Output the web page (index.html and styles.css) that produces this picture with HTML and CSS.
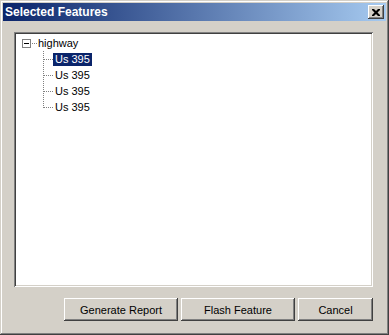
FILE: index.html
```html
<!DOCTYPE html>
<html lang="en">
<head>
    <meta charset="UTF-8">
    <title>Selected Features</title>
    <link rel="stylesheet" href="styles.css">
</head>
<body>

<div class="window">
    <div class="titlebar">
        <span class="title">Selected Features</span>
        <button class="close" aria-label="Close">
            <svg width="8" height="7" viewBox="0 0 8 7">
                <path d="M0 0h2l2 2 2-2h2v1l-2.5 2.5L8 6v1H6L4 5 2 7H0V6l2.5-2.5L0 1z" fill="#000"/>
            </svg>
        </button>
    </div>

    <div class="content">
        <div class="tree">
            <div class="row root">
                <span class="expander"><span class="minus"></span></span>
                <span class="stub"></span>
                <span class="label">highway</span>
            </div>
            <div class="children">
                <div class="row child">
                    <span class="branch"></span>
                    <span class="label selected">Us 395</span>
                </div>
                <div class="row child">
                    <span class="branch"></span>
                    <span class="label">Us 395</span>
                </div>
                <div class="row child">
                    <span class="branch"></span>
                    <span class="label">Us 395</span>
                </div>
                <div class="row child last">
                    <span class="branch"></span>
                    <span class="label">Us 395</span>
                </div>
            </div>
        </div>

        <div class="buttons">
            <button class="btn wide">Generate Report</button>
            <button class="btn wide">Flash Feature</button>
            <button class="btn">Cancel</button>
        </div>
    </div>
</div>

</body>
</html>
```

FILE: styles.css
```css
body {
    margin: 0;
    padding: 0;
    background: #d4d0c8;
    font-family: 'Liberation Sans', Arial, sans-serif;
    font-size: 11px;
}
.window {
    width: 389px;
    height: 335px;
    box-sizing: border-box;
    padding: 3px;
    background: #d4d0c8;
    box-shadow: inset -1px -1px #404040, inset 1px 1px #d4d0c8,
                inset -2px -2px #808080, inset 2px 2px #fff;
    display: flex;
    flex-direction: column;
}
.titlebar {
    height: 18px;
    display: flex;
    align-items: center;
    justify-content: space-between;
    padding: 0 2px 0 2px;
    background: linear-gradient(to right, #0a246a, #a6caf0);
}
.title {
    color: #fff;
    font-weight: bold;
    font-size: 12px;
}
.close {
    width: 16px;
    height: 14px;
    padding: 0;
    border: none;
    background: #d4d0c8;
    display: flex;
    align-items: center;
    justify-content: center;
    box-shadow: inset -1px -1px #404040, inset 1px 1px #fff,
                inset -2px -2px #808080, inset 2px 2px #d4d0c8;
}
.content {
    flex: 1;
    display: flex;
    flex-direction: column;
    padding: 11px 13px 0 11px;
}
.tree {
    height: 255px;
    box-sizing: border-box;
    background: #fff;
    padding: 3px 0 0 8px;
    box-shadow: inset 1px 1px #808080, inset -1px -1px #fff,
                inset 2px 2px #404040, inset -2px -2px #d4d0c8;
}
.row {
    height: 16px;
    display: flex;
    align-items: center;
}
.expander {
    width: 9px;
    height: 9px;
    box-sizing: border-box;
    border: 1px solid #808080;
    display: flex;
    align-items: center;
    justify-content: center;
}
.minus {
    width: 5px;
    height: 1px;
    background: #000;
}
.stub {
    width: 5px;
    height: 1px;
    margin-left: 1px;
    background: repeating-linear-gradient(to right, #808080 0 1px, transparent 1px 2px);
}
.label {
    padding: 0 2px;
    line-height: 13px;
    height: 13px;
    color: #000;
}
.root .label {
    padding: 0 1px;
}
.label.selected {
    background: #0a246a;
    color: #fff;
}
.children {
    margin-left: 21px;
}
.branch {
    width: 10px;
    height: 16px;
    background:
        repeating-linear-gradient(to bottom, #808080 0 1px, transparent 1px 2px) 0 0 / 1px 100% no-repeat,
        repeating-linear-gradient(to right, #808080 0 1px, transparent 1px 2px) 1px 8px / 9px 1px no-repeat;
}
.child.last .branch {
    background:
        repeating-linear-gradient(to bottom, #808080 0 1px, transparent 1px 2px) 0 0 / 1px 9px no-repeat,
        repeating-linear-gradient(to right, #808080 0 1px, transparent 1px 2px) 1px 8px / 9px 1px no-repeat;
}
.buttons {
    display: flex;
    justify-content: flex-end;
    gap: 3px;
    margin-top: 11px;
}
.btn {
    width: 75px;
    height: 23px;
    padding: 0;
    border: none;
    background: #d4d0c8;
    font-family: 'Liberation Sans', Arial, sans-serif;
    font-size: 11px;
    color: #000;
    box-shadow: inset -1px -1px #404040, inset 1px 1px #fff,
                inset -2px -2px #808080, inset 2px 2px #d4d0c8;
}
.btn.wide {
    width: 114px;
}
```
